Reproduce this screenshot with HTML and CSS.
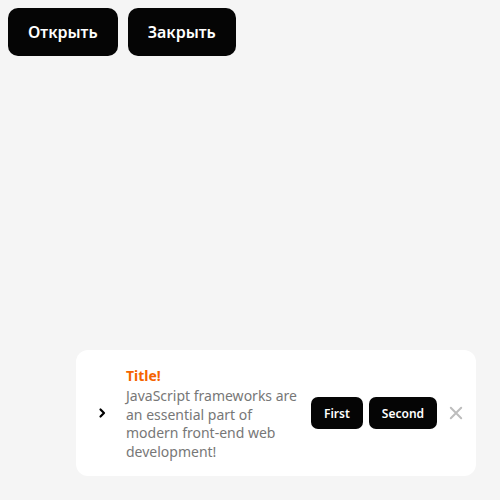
FILE: index.html
```html
<!DOCTYPE html>
<html lang="ru">
<head>
<meta charset="utf-8">
<link rel="stylesheet" href="styles.css">
</head>
<body>
<div class="controls">
  <button class="btn">Открыть</button>
  <button class="btn">Закрыть</button>
</div>
<div class="toast">
  <span class="toast-icon">
    <svg width="24" height="24" viewBox="0 0 24 24"><path d="M9.5 8.5 L13 12 L9.5 15.5" fill="none" stroke="#000" stroke-width="2.2" stroke-linecap="round" stroke-linejoin="round"/></svg>
  </span>
  <div class="toast-body">
    <div class="toast-title">Title!</div>
    <div class="toast-text">JavaScript frameworks are an essential part of modern front-end web development!</div>
  </div>
  <div class="toast-actions">
    <button class="btn-sm">First</button>
    <button class="btn-sm">Second</button>
  </div>
  <span class="toast-close">
    <svg width="20" height="20" viewBox="0 0 20 20"><path d="M4.8 4.8 L15.2 15.2 M15.2 4.8 L4.8 15.2" stroke="#bdbdbd" stroke-width="2" stroke-linecap="round"/></svg>
  </span>
</div>
</body>
</html>
```
FILE: styles.css
```css
html, body { margin: 0; }
body {
  background: #f5f5f5;
  font-family: "Noto Sans", sans-serif;
  min-height: 500px;
}
.controls {
  display: flex;
  gap: 10px;
  padding: 8px;
}
.btn {
  height: 48px;
  padding: 0 20px;
  border: 0;
  border-radius: 10px;
  background: #050505;
  color: #fff;
  font-family: "Noto Sans", sans-serif;
  font-size: 16px;
  font-weight: 600;
}
.toast {
  position: fixed;
  right: 24px;
  bottom: 24px;
  width: 400px;
  box-sizing: border-box;
  background: #fff;
  border-radius: 12px;
  padding: 17px 10px 15px 15px;
  display: flex;
  align-items: center;
}
.toast-icon { width: 24px; height: 24px; flex: none; display: flex; margin-bottom: 2px; }
.toast-body { margin-left: 11px; width: 178px; flex: none; }
.toast-title {
  color: #f56400;
  font-size: 14px;
  font-weight: 700;
  line-height: 18px;
  margin-bottom: 2px;
}
.toast-text {
  color: #777;
  font-size: 14px;
  line-height: 18.5px;
}
.toast-actions { display: flex; gap: 6px; margin-left: 7px; margin-bottom: 2px; }
.btn-sm {
  height: 32px;
  padding: 0 13px;
  border: 0;
  border-radius: 7px;
  background: #050505;
  color: #fff;
  font-family: "Noto Sans", sans-serif;
  font-size: 12px;
  font-weight: 600;
}
.toast-close { margin-left: 9px; width: 20px; height: 20px; display: flex; margin-bottom: 2px; }
```
